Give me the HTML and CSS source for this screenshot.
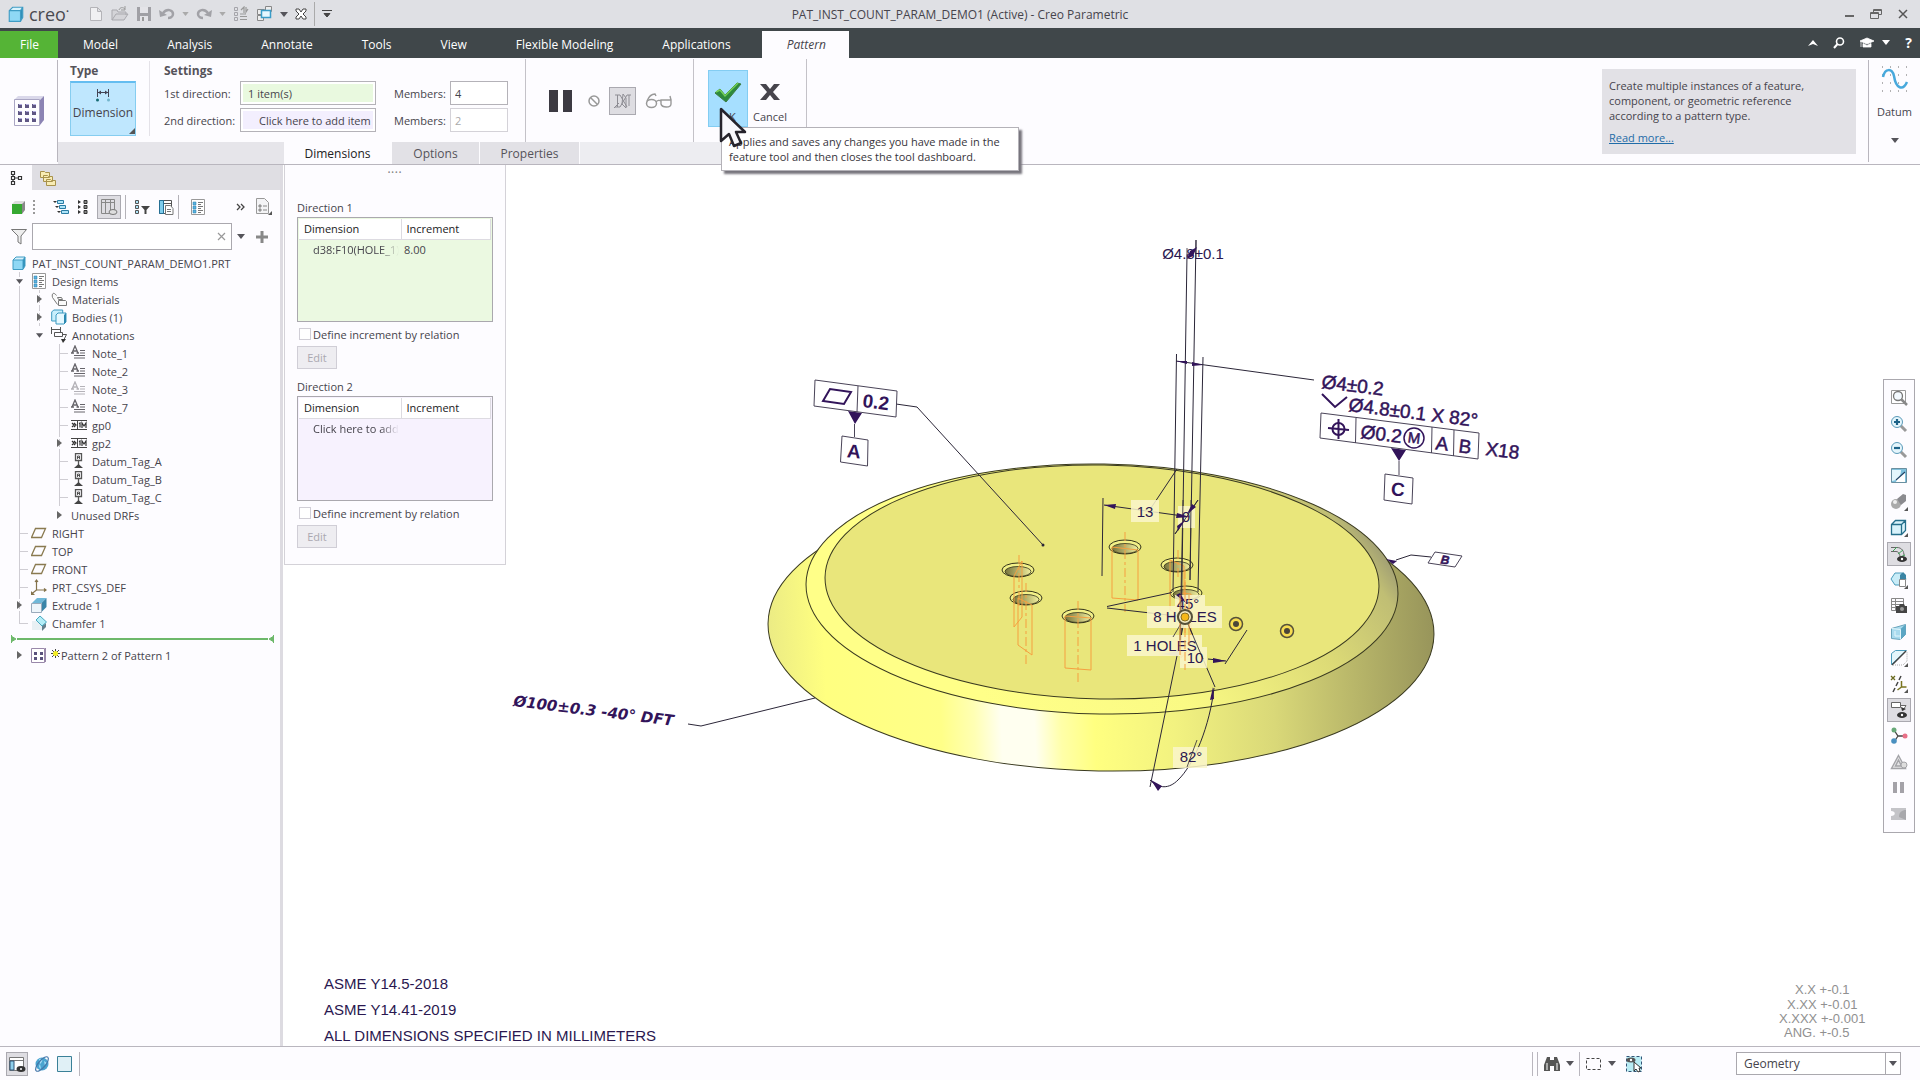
FILE: index.html
```html
<!DOCTYPE html>
<html lang="en">
<head>
<meta charset="utf-8">
<title>PAT_INST_COUNT_PARAM_DEMO1 (Active) - Creo Parametric</title>
<link rel="stylesheet" href="styles.css">
</head>
<body>
<svg class="defs" aria-hidden="true">
  <symbol id="down" viewBox="0 0 8 5"><path d="M0 0h8L4 5z" fill="currentColor"/></symbol>
  <symbol id="right" viewBox="0 0 5 8"><path d="M0 0v8l5-4z" fill="#666"/></symbol>
  <symbol id="cube" viewBox="0 0 16 16"><path d="M2 5l3-3h9l-2 3z" fill="#d8f2fc"/><path d="M12 5l2-3v9l-2 3z" fill="#2f8fb8"/><path d="M2 5h10v9.500H2z" fill="#8fd8f5"/><path d="M2 5l3-3h9v9l-2 3.500H2z M2 5h10v9 M12 5l2-3" fill="none" stroke="#3f9cc4"/></symbol>
  <symbol id="list" viewBox="0 0 16 16"><path d="M1.500.500h13v15h-13z" fill="#fff" stroke="#999"/><path d="M3 3h3v3H3z M3 7h3v3H3z M3 11h3v3H3z" fill="#5ab4e0" stroke="#2a78a8" stroke-width=".5"/><path d="M8 3.500h5M8 5.500h3M8 7.500h5M8 9.500h3M8 11.500h5M8 13.500h3" stroke="#777"/></symbol>
  <symbol id="note" viewBox="0 0 16 16"><path d="M1 8L4 1l3 7M2 6h4M0 8h3M5.500 8H8" fill="none" stroke="currentColor" stroke-width="1.300"/><path d="M9 5.500h5M9 8h5M3 10.500h11M3 13h11" stroke="currentColor"/></symbol>
  <symbol id="gp" viewBox="0 0 16 16"><path d="M0 3.500h16M0 12.500h16M6.500 3v10" stroke="#444"/><path d="M1 6l2 2-2 2M3 6l2 2-2 2M8 6.500l1-.5v4.500M11 11V6l2 3 2-3v5" fill="none" stroke="#333" stroke-width="1.200"/></symbol>
  <symbol id="tag" viewBox="0 0 16 16"><path d="M4.500.500h6v7h-6zM7.500 8v4" fill="none" stroke="#555" stroke-width="1.300"/><path d="M6.500 6V3h2v3M6.500 4.500h2" fill="none" stroke="#333" stroke-width=".8"/><path d="M3 15h9l-4.500-4z" fill="#444"/></symbol>
  <symbol id="plane" viewBox="0 0 16 16"><path d="M4.500 3.500h10l-4 9h-10z" fill="none" stroke="#8a7a50" stroke-width="1.300"/></symbol>
</svg>

<header class="titlebar">
  <div class="quick">
    <svg class="logo" width="18" height="18"><use href="#cube"/></svg><span class="brand">creo<sup>•</sup></span>
    <button aria-label="New"><svg width="16" height="16"><path d="M2.500 1.500h7l4 4v9h-11zM9.500 1.500v4h4" fill="#f0f0f2" stroke="#b4b4b8"/></svg></button>
    <button aria-label="Open"><svg width="18" height="16"><path d="M1 14V4h5l1 2h8v3M1 14l4-6h12l-4 6z" fill="#d4d4d8" stroke="#a9a9ae"/><path d="M8 4c1-3 4-3 6-1M14 0v4h-4" fill="none" stroke="#999"/></svg></button>
    <button aria-label="Save"><svg width="16" height="16"><path d="M1 1h14v14H1z" fill="#a0a0a5"/><path d="M4 1h8v6H4zM4 10h8v5H4z" fill="#e4e4e8"/><path d="M6 11h2v4H6z" fill="#999"/></svg></button>
    <button aria-label="Undo"><svg width="16" height="16"><path d="M4 7c4-5 10-3 10 1 0 3-3 4-5 4" fill="none" stroke="#a2a2a7" stroke-width="2.500"/><path d="M0 4l1 7 7-2z" fill="#a2a2a7"/></svg></button>
    <button class="dd pale" aria-label="Undo list"><svg width="7" height="4"><use href="#down"/></svg></button>
    <button aria-label="Redo"><svg width="16" height="16"><path d="M12 7c-4-5-10-3-10 1 0 3 3 4 5 4" fill="none" stroke="#a2a2a7" stroke-width="2.500"/><path d="M16 4l-1 7-7-2z" fill="#a2a2a7"/></svg></button>
    <button class="dd pale" aria-label="Redo list"><svg width="7" height="4"><use href="#down"/></svg></button>
    <button aria-label="Regenerate"><svg width="16" height="16"><path d="M1.500 1.500h3v3h-3zM1.500 6.500h3v3h-3zM1.500 11.500h3v3h-3z" fill="none" stroke="#a5a5aa"/><path d="M7 8h6M7 10.500h7M7 13.500h7M8 4l3-3v6M15 3l-2 3V1" fill="none" stroke="#999" stroke-width="1.200"/></svg></button>
    <button aria-label="Windows"><svg width="17" height="16"><path d="M1.500 3.500h7v5h-7zM9.500.500h6v5h-6zM1.500 9.500h6v5h-6z" fill="#eee" stroke="#888"/><path d="M5.500 4.500h9v7h-9z" fill="#e6f7ff" stroke="#3a9cc8" stroke-width="1.500"/></svg></button>
    <button class="dd" aria-label="Window list"><svg width="8" height="5"><use href="#down"/></svg></button>
    <button aria-label="Close window"><svg width="12" height="12"><path d="M1 1h3l2 3 2-3h3v2L8 6l3 3v2H8L6 8l-2 3H1V9l3-3-3-3z" fill="#fff" stroke="#444"/></svg></button>
    <span class="tsep"></span>
    <button aria-label="Customize"><svg width="10" height="9"><path d="M0 .5h10M2 3.500h6L5 7z" fill="#444" stroke="#444"/></svg></button>
  </div>
  <h1>PAT_INST_COUNT_PARAM_DEMO1 (Active) - Creo Parametric</h1>
  <div class="winctl">
    <button aria-label="Minimize"><svg width="12" height="12"><path d="M2 8h9" stroke="#666" stroke-width="2"/></svg></button>
    <button aria-label="Restore"><svg width="12" height="12"><path d="M3.500 4V1.500h8v5H9M.500 4.500h8v6h-8zM.500 5.500h8M3.500 2.500h8" fill="none" stroke="#666"/></svg></button>
    <button aria-label="Close"><svg width="12" height="12"><path d="M2 2l8 8M10 2l-8 8" stroke="#555" stroke-width="1.500"/></svg></button>
  </div>
</header>

<nav class="tabs">
  <a href="#file" class="file">File</a><a href="#model">Model</a><a href="#analysis">Analysis</a><a href="#annotate">Annotate</a><a href="#tools">Tools</a><a href="#view">View</a><a href="#flex">Flexible Modeling</a><a href="#apps">Applications</a><a href="#pattern" class="active">Pattern</a>
  <div class="help">
    <svg width="10" height="6"><path d="M0 6l5-6 5 6-5-2z" fill="#fff"/></svg>
    <svg width="12" height="12"><circle cx="7" cy="4.500" r="3.500" fill="none" stroke="#fff" stroke-width="1.600"/><path d="M4.500 7L1 11" stroke="#fff" stroke-width="2"/></svg>
    <svg width="14" height="12"><path d="M0 4l7-3 7 3-7 3zM3 6.500l4 2 4-2V10H3zM1 4v6" fill="#fff" stroke="#fff" stroke-width=".8"/></svg>
    <svg class="near" width="8" height="5"><use href="#down"/></svg>
    <b>?</b>
  </div>
</nav>

<section class="ribbon">
  <div class="feature"><svg width="32" height="32"><path d="M1 5l4-4h26l-4 4z" fill="#dad8ea"/><path d="M27 5l4-4v24l-4 5z" fill="#8c84b4"/><path d="M1.500 4.500h25v26h-25z" fill="#fdfdff" stroke="#aaa6c4"/><path d="M5 9h4v4H5zM12 9h4v4h-4zM19 9h4v4h-4zM5 16h4v4H5zM12 16h4v4h-4zM19 16h4v4h-4zM5 23h4v4H5zM12 23h4v4h-4zM19 23h4v4h-4z" fill="#5f5784"/><path d="M6 9h3v1H6zM13 9h3v1h-3zM20 9h3v1h-3zM6 16h3v1H6zM13 16h3v1h-3zM20 16h3v1h-3zM6 23h3v1H6zM13 23h3v1h-3zM20 23h3v1h-3z" fill="#b4aee0"/></svg></div>
  <div class="dash">
    <div class="groups">
      <div class="group type">
        <h2>Type</h2>
        <button class="bigbtn"><svg width="16" height="14"><path d="M2.500 1v8M13.500 1v8M3 4.500h10" stroke="#445" fill="none"/><path d="M3 4.500l3-2v4zM13 4.500l-3-2v4z" fill="#445"/><circle cx="2.500" cy="12" r="1.500" fill="#156a72"/><circle cx="13.500" cy="12" r="1.500" fill="#72b4cc"/></svg>Dimension<svg class="corner" width="6" height="6"><path d="M6 0v6H0z" fill="#555"/></svg></button>
      </div>
      <div class="group settings">
        <h2>Settings</h2>
        <div class="form">
          <label for="d1">1st direction:</label><input id="d1" class="green" value="1 item(s)">
          <label for="m1" class="mem">Members:</label><input id="m1" value="4">
          <label for="d2">2nd direction:</label><input id="d2" class="violet" value="Click here to add item">
          <label for="m2" class="mem">Members:</label><input id="m2" value="2" disabled>
        </div>
      </div>
      <div class="group play">
        <button aria-label="Pause"><svg width="24" height="22"><path d="M0 0h9v22H0zM14 0h9v22h-9z" fill="#3c3a42"/></svg></button>
        <button aria-label="No preview"><svg width="12" height="12"><circle cx="6" cy="6" r="5" fill="none" stroke="#999" stroke-width="1.500"/><path d="M2.500 2.500l7 7" stroke="#999" stroke-width="1.500"/></svg></button>
        <button class="pressed" aria-label="Attached preview"><svg width="20" height="18"><path d="M2 3h5M4.500 3v12M2 15h5l7-12h4M16 3v11M7 3l7 12M10 2l3 4v10l-4-4zM1 16l5-5" fill="none" stroke="#8e8d94"/></svg></button>
        <button aria-label="Verify"><svg width="28" height="16"><ellipse cx="6.500" cy="10.500" rx="5" ry="4" fill="none" stroke="#999" stroke-width="1.500"/><path d="M16 7h10v4c0 4-9 4-10 0zM11 9c1-2 4-2 5-1M2 8c2-5 5-7 8-7l1 2M26 7l-1-4" fill="none" stroke="#999" stroke-width="1.400"/></svg></button>
      </div>
      <div class="group confirm">
        <div class="okwrap">
          <button class="ok"><svg width="28" height="22"><path d="M1 12l5-4 5 6L23 2l4 1-15 18z" fill="#2c8a3c" stroke="#3d7c42"/><path d="M2 11l4-2 5 6L24 2" fill="none" stroke="#72cf58" stroke-width="1.500"/></svg>OK</button>
          <div class="tip" role="tooltip">Applies and saves any changes you have made in the feature tool and then closes the tool dashboard.</div>
          <svg class="cursor" width="28" height="42"><path d="M2 2v32l8-7 5 12 7-3-5-11h9z" fill="#f8f8fc" stroke="#26242c" stroke-width="2.500" stroke-linejoin="round"/></svg>
        </div>
        <button class="cancel"><svg width="20" height="22"><path d="M0 3h6l4 5 4-5h6l-7 8 7 8h-6l-4-5-4 5H0l7-8z" fill="#46444c"/></svg>Cancel</button>
      </div>
    </div>
    <div class="subtabs"><span class="lead"></span><button class="on">Dimensions</button><button>Options</button><button>Properties</button><span class="tail"></span></div>
  </div>
  <div class="info"><p>Create multiple instances of a feature, component, or geometric reference according to a pattern type.</p><a href="#more">Read more...</a></div>
  <button class="datum"><svg width="28" height="28"><path d="M1 2h25M1 10h25M1 18h25M1 26h25" stroke="#666" stroke-dasharray="1 7"/><path d="M2 12C4 3 11 3 13 11c2 13 9 15 13 6" fill="none" stroke="#48a9dc" stroke-width="2.500"/></svg>Datum<svg class="drop" width="8" height="5"><use href="#down"/></svg></button>
</section>

<main class="work">
  <aside class="side">
    <div class="sidetabs">
      <button class="on" aria-label="Model tree"><svg width="14" height="16"><path d="M2.500 1.500h3v3h-3zM2.500 6.500h3v3h-3zM2.500 11.500h3v3h-3zM9.500 6.500h3v3h-3zM4 4.500v2M4 9.500v2M6 8h3" fill="none" stroke="#333" stroke-width="1.200"/></svg></button>
      <button aria-label="Folder browser"><svg width="18" height="18"><path d="M1.500 2.500h4l1 1h4v5h-9zM4.500 6.500h4l1 1h4v5h-9zM7.500 10.500h4l1 1h4v5h-9z" fill="#f8ecb4" stroke="#a8924c"/></svg></button>
    </div>
    <div class="tools">
      <button aria-label="Layers"><svg width="16" height="16"><path d="M1 5l3-3h10l-3 3z" fill="#ddd"/><path d="M11 5l3-3v9l-3 4z" fill="#888"/><path d="M1 5h10v10H1z" fill="#36a832"/></svg></button>
      <svg class="grip" width="2" height="14"><path d="M1 0v14" stroke="#999" stroke-width="2" stroke-dasharray="2 2"/></svg>
      <button class="g14" aria-label="Expand"><svg width="16" height="16"><path d="M4.500 1.500h6v3h-6zM6.500 6.500h6v3h-6zM8.500 11.500h7v3h-7z" fill="#aee4f8" stroke="#2a7ca4"/><path d="M0 2h4L2 4zM2 7h4L4 9zM4 12h4l-2 2z" fill="#333"/></svg></button>
      <button aria-label="Collapse"><svg width="12" height="16"><path d="M7 1.500h3v3H7zM7 6.500h3v3H7zM7 11.500h3v3H7z" fill="#888" stroke="#333"/><path d="M1 1v4l3-2zM1 6v4l3-2zM1 11v4l3-2z" fill="#333"/></svg></button>
      <button class="pressed" aria-label="Tree columns"><svg width="18" height="18"><path d="M1.500 1.500h13v14h-13zM1.500 4.500h13M5.500 2v13M10.500 2v13" fill="none" stroke="#888"/><ellipse cx="13" cy="14" rx="4" ry="2.500" fill="#ddd" stroke="#777"/></svg></button>
      <span class="vs"></span>
      <button aria-label="Tree filters"><svg width="16" height="16"><path d="M1.500 1.500h3v3h-3zM1.500 6.500h3v3h-3zM1.500 11.500h3v3h-3z" fill="#aee4f8" stroke="#555"/><path d="M7 7h9l-3.500 4v4h-2v-4z" fill="#444"/></svg></button>
      <button aria-label="Settings"><svg width="16" height="16"><path d="M1.500 1.500h12v13h-12zM1.500 4.500h12" fill="#fff" stroke="#555"/><path d="M1.500 1.500h4v13h-4z" fill="#7fcdec" stroke="#256f94"/><path d="M7.500 6.500h5l2.500 3v6H7.500z" fill="#fff" stroke="#777"/><path d="M9 10.500h4M9 12.500h4" stroke="#777"/></svg></button>
      <span class="vs"></span>
      <button class="items" aria-label="Design items"><svg width="16" height="16"><use href="#list"/></svg></button>
      <button class="more" aria-label="More tools"><svg width="9" height="8"><path d="M1 1l3 3-3 3M5 1l3 3-3 3" fill="none" stroke="#444" stroke-width="1.300"/></svg></button>
      <button aria-label="Show"><svg width="18" height="18"><path d="M1.500.500h8l4 4v11h-12z" fill="#f4f4f6" stroke="#999"/><path d="M4 7h2v2H4zM4 11h2v2H4z" fill="#bbb" stroke="#888"/><path d="M8 8h4M8 12h4" stroke="#888"/><path d="M17 13v4h-4z" fill="#555"/></svg></button>
    </div>
    <div class="filter">
      <svg width="18" height="18"><path d="M1.500 1.500h15L11 8v8l-3-2V8z" fill="#eee" stroke="#777"/></svg>
      <div class="searchbox"><input aria-label="Filter tree"><button aria-label="Clear"><svg width="9" height="9"><path d="M1 1l7 7M8 1L1 8" stroke="#999" stroke-width="1.200"/></svg></button></div>
      <svg width="8" height="5"><use href="#down"/></svg>
      <svg class="plus" width="12" height="12"><path d="M6 0v12M0 6h12" stroke="#888" stroke-width="3"/></svg>
    </div>
    <ul class="tree">
      <li class="root"><svg class="ic"><use href="#cube"/></svg>PAT_INST_COUNT_PARAM_DEMO1.PRT</li>
      <li><i class="v a"><svg class="dn"><use href="#down"/></svg></i><svg class="ic"><use href="#list"/></svg>Design Items</li>
      <li><i class="v"></i><i class="v a"><svg class="rt"><use href="#right"/></svg></i><svg class="ic" viewBox="0 0 16 16"><path d="M5.500 4.500c-3-4-5-2-4 2l5 7M6.500 6.500h4l1 2h-4zM7.500 9.500h7l1 1v4h-8z" fill="#fafafa" stroke="#777"/></svg>Materials</li>
      <li><i class="v"></i><i class="v a"><svg class="rt"><use href="#right"/></svg></i><svg class="ic" viewBox="0 0 16 16"><path d="M.700 3l2-2h9v9l-2 2h-9z" fill="#c8effc" stroke="#3a98c0"/><path d="M5 6l2-2h8v9l-2 2H5z" fill="#e4f8ff" stroke="#3a98c0"/><path d="M13 6l2-2v9l-2 2z" fill="#2a88b0"/></svg>Bodies (1)</li>
      <li><i class="v"></i><i class="a"><svg class="dn"><use href="#down"/></svg></i><svg class="ic" viewBox="0 0 16 16"><path d="M.500 0v7M9.500 0v5M1 2.500h8M3.500 5.500h8v4h-8zM12 7.500h3.500l-3 6" fill="none" stroke="#555"/><path d="M10 12h5l-3 4z" fill="#333"/></svg>Annotations</li>
      <li><i class="v"></i><i></i><i class="v t"></i><svg class="ic dark"><use href="#note"/></svg>Note_1</li>
      <li><i class="v"></i><i></i><i class="v t"></i><svg class="ic dark"><use href="#note"/></svg>Note_2</li>
      <li><i class="v"></i><i></i><i class="v t"></i><svg class="ic light"><use href="#note"/></svg>Note_3</li>
      <li><i class="v"></i><i></i><i class="v t"></i><svg class="ic dark"><use href="#note"/></svg>Note_7</li>
      <li><i class="v"></i><i></i><i class="v t"></i><svg class="ic"><use href="#gp"/></svg>gp0</li>
      <li><i class="v"></i><i></i><i class="v a"><svg class="rt"><use href="#right"/></svg></i><svg class="ic"><use href="#gp"/></svg>gp2</li>
      <li><i class="v"></i><i></i><i class="v t"></i><svg class="ic"><use href="#tag"/></svg>Datum_Tag_A</li>
      <li><i class="v"></i><i></i><i class="v t"></i><svg class="ic"><use href="#tag"/></svg>Datum_Tag_B</li>
      <li><i class="v"></i><i></i><i class="v t"></i><svg class="ic"><use href="#tag"/></svg>Datum_Tag_C</li>
      <li><i class="v"></i><i></i><i class="a"><svg class="rt"><use href="#right"/></svg></i>Unused DRFs</li>
      <li><i class="v t"></i><svg class="ic"><use href="#plane"/></svg>RIGHT</li>
      <li><i class="v t"></i><svg class="ic"><use href="#plane"/></svg>TOP</li>
      <li><i class="v t"></i><svg class="ic"><use href="#plane"/></svg>FRONT</li>
      <li><i class="v t"></i><svg class="ic" viewBox="0 0 16 16"><path d="M5.500 1v10h10M5.500 11l-5 4M4 3l1.500-2L7 3M13 9.500l2 1.500-2 1.500" fill="none" stroke="#84724a" stroke-width="1.200"/><path d="M0 12v4h4z" fill="#84724a"/></svg>PRT_CSYS_DEF</li>
      <li><i class="v a"><svg class="rt"><use href="#right"/></svg></i><svg class="ic" viewBox="0 0 16 16"><path d="M1 6l5-5h9.500l-5 5z" fill="#6fb8d8"/><path d="M10.500 6l5-5v9l-5 5z" fill="#3a84a8"/><path d="M.500 6.500h10v9H.500z" fill="#edf5fa" stroke="#9ab"/></svg>Extrude 1</li>
      <li><i class="v t end"></i><svg class="ic" viewBox="0 0 16 16"><path d="M1 6h5l5 5v4H1z" fill="#e8f0f4"/><path d="M11 11l4-3v4l-4 4z" fill="#667f8c"/><path d="M5 5l4-4 6.500 6-4.500 4z" fill="#b4eef8" stroke="#4aa8c0"/></svg>Chamfer 1</li>
      <li class="insert"><svg width="6" height="8"><path d="M.500 0v8M0 1l5 3-5 3z" fill="#6db86a" stroke="#6db86a"/></svg><span></span><svg width="6" height="8"><path d="M5.500 0v8M6 1L1 4l5 3z" fill="#6db86a" stroke="#6db86a"/></svg></li>
      <li><i class="a"><svg class="rt"><use href="#right"/></svg></i><svg class="ic" viewBox="0 0 16 16"><path d="M.500 1.500h13v14H.500zM14.500 1v14" fill="#fff" stroke="#98a"/><path d="M3 5h3v3H3zM9 5h3v3H9zM3 10h3v3H3zM9 10h3v3H9z" fill="#5a527c"/></svg><svg class="star" width="9" height="9"><path d="M4.500 0v9M0 4.500h9M1 1l7 7M8 1L1 8" stroke="#444"/><circle cx="4.500" cy="4.500" r="2.500" fill="#f4ec20"/></svg>Pattern 2 of Pattern 1</li>
    </ul>
  </aside>

  <div class="canvas">
    <svg class="model" viewBox="283 165 1637 881" role="img" aria-label="Annotated part model">
      <defs>
        <linearGradient id="wall" gradientUnits="userSpaceOnUse" x1="768" y1="600" x2="1434" y2="560">
          <stop offset="0" stop-color="#ecec84"/><stop offset=".08" stop-color="#ffff80"/><stop offset=".25" stop-color="#ffff88"/><stop offset=".3" stop-color="#ffffb4"/><stop offset=".34" stop-color="#fffff0"/><stop offset=".39" stop-color="#fffff0"/><stop offset=".43" stop-color="#ffffa8"/><stop offset=".48" stop-color="#ffff80"/><stop offset=".6" stop-color="#f2f280"/><stop offset=".75" stop-color="#d9d878"/><stop offset="1" stop-color="#96935a"/>
        </linearGradient>
        <linearGradient id="chamfer" gradientUnits="userSpaceOnUse" x1="1000" y1="720" x2="1330" y2="480">
          <stop offset="0" stop-color="#ffff88"/><stop offset=".4" stop-color="#fafa84"/><stop offset=".75" stop-color="#dcda76"/><stop offset=".95" stop-color="#c0be74"/><stop offset="1" stop-color="#a5a374"/>
        </linearGradient>
        <linearGradient id="bore"><stop offset="0" stop-color="#77743c"/><stop offset="1" stop-color="#f0ee9c"/></linearGradient>
        <g id="hole"><ellipse rx="16" ry="7" fill="#f2f088" stroke="#33331a"/><ellipse cy="1.500" rx="13" ry="5" fill="url(#bore)" stroke="#33331a" stroke-width=".8"/></g>
        <g id="pin"><circle r="6.500" fill="#f6dc50" stroke="#55513a" stroke-width="1.500"/><circle r="3" fill="#4a4538"/></g>
      </defs>
      <g stroke="#3a3a20">
        <ellipse cx="1101" cy="629" rx="333" ry="142" transform="rotate(1 1101 629)" fill="url(#wall)"/>
        <ellipse cx="1102" cy="589" rx="296" ry="125" transform="rotate(1 1102 589)" fill="url(#chamfer)"/>
        <ellipse cx="1102" cy="582" rx="277" ry="117" transform="rotate(1 1102 582)" fill="#e9e67b"/>
      </g>
      <use href="#hole" x="1018" y="570"/><use href="#hole" x="1026" y="598"/><use href="#hole" x="1125" y="547"/><use href="#hole" x="1177" y="565"/><use href="#hole" x="1078" y="616"/><use href="#hole" x="1186" y="593"/>
      <g fill="none" stroke="#f5a040">
        <path d="M1112 547v51l26 2v-50zM1065 616v52l26 2v-52zM1014 576v51l8-10v-56zM1018 598v47l14 10v-50zM1170 560v50l14 6v-50zM1181 593v65l10-12v-52z"/>
        <path d="M1125 532v80M1078 601v82M1019 555v52M1026 583v82M1178 550v30M1185 570v90" stroke-dasharray="9 3 3 3"/>
      </g>
      <g fill="none" stroke="#2b2638">
        <path d="M1176.500 354L1173 592M1187 254L1181 640M1196 240L1190 580M1203 357L1198 592"/>
        <path d="M1176 361l138 19M1103 498l-1 78M1104 505l86 12M1151 508l26-39M1175 534l23-34"/>
        <path d="M1107 606.500l65-14M1107 608l78 9M1185 617l-35 170M1185 617l30 70M1208 659l18 2M1225 664l22-34"/>
        <path d="M1214 688c-4 37-20 77-36 92-9 9-19 9-28 0"/>
        <path d="M688 724l13 2 114-28M896 404l21 3 126 138M1431 557l-20-2-15 5"/>
      </g>
      <circle cx="1043" cy="545" r="1.500" fill="#2b2638"/>
      <path d="M1161 654l18-3v5z" fill="#a8a4cc"/>
      <g fill="#faf6cc" fill-opacity=".85">
        <path d="M1131 500h28v22h-28zM1178 506h17v22h-17zM1175 595h30v20h-30zM1147 606h75v22h-75zM1127 635h75v21h-75zM1180 647h27v21h-27zM1173 747h34v21h-34z"/>
      </g>
      <g class="dim" text-anchor="middle">
        <text x="1145" y="517">13</text><text x="1186" y="522">0</text><text x="1188" y="609">45°</text><text x="1185" y="622">8 HOLES</text><text x="1165" y="651">1 HOLES</text><text x="1195" y="663">10</text><text x="1191" y="762">82°</text><text x="1193" y="259">Ø4.8±0.1</text>
      </g>
      <g fill="none" stroke="#2b2638" stroke-width=".8"><path d="M1175 534l23-34M1183 500l-3 140M1191 500l-1 80M1185 617l-12 20M1185 617l18 42M1187 254v-6M1196 240v18M1197 740l-10 27"/></g>
      <g fill="#32145a">
        <path d="M1104 505l12-1-1 5zM1190 517l-13-4-1 5zM1185 520l-7 11-1-5zM1187 514l5-10 4 3zM1226 661l-13-3v5zM1213 687l-3 13 4-1zM1151 780l11 6-4 5zM1176 361l11 0v3zM1203 365l-11-3v4zM1187 259l3-8 7-4-4 9zM1397 561l-11-2 7 5zM1186 603l-6-10-4 2z"/>
        <path d="M848 411l14 2-7 11zM1391 448l15 2-7 11z"/>
      </g>
      <g stroke="#f5a040" fill="none"><path d="M1180 595v60M1189 595v50"/><path d="M1185 580v90" stroke-dasharray="9 3"/></g>
      <g transform="translate(1185 617)"><circle r="7" fill="#f0e8c0" stroke="#55513a" stroke-width="2"/><circle r="4" fill="#f6b818" stroke="#8a7024"/></g>
      <use href="#pin" x="1236" y="624"/><use href="#pin" x="1287" y="631"/>
      <g fill="#fff" stroke="#4a4458">
        <path d="M815 380l82 11-1 26-82-11zM858 386l-1 26M854.500 424v13M842 436l26 4-.5 26-27-4z"/>
        <path d="M1321 413l158 20-1 26-158-21zM1356 418l-.5 25M1432 427l-.5 26M1454 430l-.5 26M1399 461v14M1385 474l28 4-1 26-28-4zM1435 552l27 4-7 11-27-4z"/>
      </g>
      <g fill="none" stroke="#32145a" stroke-width="2">
        <path d="M823 401l7-12 21 3-7 12zM1322 394l13 13 12-10"/>
        <circle cx="1338.500" cy="429" r="6"/><path d="M1328 428l21 2M1338.500 419v20"/><circle cx="1414" cy="438" r="10" stroke-width="1.500"/>
      </g>
      <g class="gtol">
        <text class="b" x="862" y="407" transform="rotate(7 862 407)">0.2</text>
        <text class="b" x="854" y="458" text-anchor="middle" transform="rotate(5 854 451)">A</text>
        <text x="1321" y="388" transform="rotate(7 1321 388)">Ø4±0.2</text>
        <text x="1348" y="411" transform="rotate(7 1348 411)">Ø4.8±0.1 X 82°</text>
        <text x="1360" y="438" transform="rotate(7 1360 438)">Ø0.2</text>
        <text class="m" x="1414" y="443" text-anchor="middle" transform="rotate(7 1414 438)">M</text>
        <text x="1442" y="450" text-anchor="middle" transform="rotate(7 1442 444)">A</text>
        <text x="1465" y="453" text-anchor="middle" transform="rotate(7 1465 447)">B</text>
        <text x="1485" y="455" transform="rotate(7 1485 455)">X18</text>
        <text class="b" x="1398" y="496" text-anchor="middle" transform="rotate(5 1398 489)">C</text>
        <text class="tagb" x="1445" y="564" text-anchor="middle" transform="rotate(7 1445 560)">B</text>
        <text class="wide" x="513" y="706" transform="rotate(7 513 706)">Ø100±0.3 -40° DFT</text>
      </g>
      <g class="std"><text x="324" y="989">ASME Y14.5-2018</text><text x="324" y="1015">ASME Y14.41-2019</text><text x="324" y="1041">ALL DIMENSIONS SPECIFIED IN MILLIMETERS</text></g>
      <g class="acc"><text x="1795" y="994">X.X +-0.1</text><text x="1787" y="1009">X.XX +-0.01</text><text x="1779" y="1023">X.XXX +-0.001</text><text x="1784" y="1037">ANG. +-0.5</text></g>
    </svg>

    <section class="panel">
      <div class="dots">••••</div>
      <h3>Direction 1</h3>
      <div class="grid green"><table><thead><tr><th>Dimension</th><th>Increment</th></tr></thead><tbody><tr><td class="fade">d38:F10(HOLE_1)</td><td>8.00</td></tr></tbody></table></div>
      <div class="check"><input type="checkbox" id="r1"><label for="r1">Define increment by relation</label></div>
      <button class="edit" disabled>Edit</button>
      <h3>Direction 2</h3>
      <div class="grid violet"><table><thead><tr><th>Dimension</th><th>Increment</th></tr></thead><tbody><tr><td class="fade">Click here to add</td><td></td></tr></tbody></table></div>
      <div class="check"><input type="checkbox" id="r2"><label for="r2">Define increment by relation</label></div>
      <button class="edit" disabled>Edit</button>
    </section>

    <div class="viewbar">
      <button aria-label="Refit"><svg viewBox="0 0 18 18"><path d="M1.500 1.500h14v13h-14z" fill="#fff" stroke="#999"/><circle cx="8" cy="7" r="4.500" fill="#f4faff" stroke="#777" stroke-width="1.300"/><path d="M11 10l6 6" stroke="#888" stroke-width="2.500"/></svg></button>
      <button aria-label="Zoom in"><svg viewBox="0 0 18 18"><path d="M10 10l6 6" stroke="#999" stroke-width="3"/><circle cx="7" cy="7" r="5.500" fill="#e4f5fc" stroke="#5a9ab8"/><path d="M4 7h6M7 4v6" stroke="#1c6288" stroke-width="2.200"/></svg></button>
      <button aria-label="Zoom out"><svg viewBox="0 0 18 18"><path d="M10 10l6 6" stroke="#999" stroke-width="3"/><circle cx="7" cy="7" r="5.500" fill="#e4f5fc" stroke="#5a9ab8"/><path d="M4 7h6" stroke="#1c6288" stroke-width="2.200"/></svg></button>
      <button aria-label="Repaint"><svg viewBox="0 0 18 18"><path d="M1.500 1.500h15v14h-15z" fill="#7fc0dc" stroke="#6a8fa0"/><path d="M2 3h9c0 6-3 10-9 11z" fill="#e4f6fc"/><path d="M7 12l8-7v10H6z" fill="#fff"/><path d="M6 13l9-8" stroke="#246" stroke-width="1.200"/></svg></button>
      <button aria-label="Rendering"><svg viewBox="0 0 18 18"><circle cx="6" cy="11" r="5" fill="#aaa"/><path d="M7 6l6-5 3 1v6l-5 4z" fill="#8b8b8f"/><circle cx="5" cy="9" r="2" fill="#eee"/><path d="M18 14v4h-4z" fill="#555"/></svg></button>
      <button aria-label="Display style"><svg viewBox="0 0 18 18"><path d="M1.500 5.500l4-4h10v10l-4 4h-10zM1.500 5.500h10v10M11.500 5.500l4-4" fill="#d8f2fb" stroke="#256f8c" stroke-width="1.300"/><path d="M18 14v4h-4z" fill="#555"/></svg></button>
      <button class="pressed" aria-label="Edge display"><svg viewBox="0 0 18 18"><path d="M1 2.500h6c5 0 7 4 7 8M1 6.500h5c3 0 4 3 4 6" fill="none" stroke="#666"/><path d="M3 6l4-4M8 9l5-4M10 12l5-2" stroke="#3da858"/><ellipse cx="12" cy="14" rx="5" ry="3" fill="#333"/><circle cx="12" cy="14" r="1.200" fill="#fff"/></svg></button>
      <button aria-label="Saved views"><svg viewBox="0 0 18 18"><path d="M1 8l4-6h7l4 6-4 6H5z" fill="#c8ecf8" stroke="#4a9cbc"/><path d="M10 8V4l3-3 3 3v4z" fill="#3a84a4"/><path d="M9.500 8.500h6v7h-6z" fill="#fff" stroke="#888"/><path d="M18 14v4h-4z" fill="#555"/></svg></button>
      <button aria-label="View images"><svg viewBox="0 0 18 18"><path d="M1.500 1.500h12v12h-12zM1.500 4.500h12M1.500 7.500h12M1.500 10.500h12M5.500 2v12" fill="none" stroke="#888"/><path d="M6 9h3l1-2h4l1 2h2v7H6z" fill="#444"/><circle cx="12" cy="12" r="2" fill="#999"/></svg></button>
      <button aria-label="Perspective"><svg viewBox="0 0 18 18"><path d="M1.500 5.500l14-4v10l-5 5-9-1z" fill="#a8daee" stroke="#6aa4bc"/><path d="M10.500 6l5-4.500v10l-5 5z" fill="#5ba6c4"/><path d="M1.500 5.500l9 1v10M5 8v5h5" fill="none" stroke="#e4f6fc"/></svg></button>
      <button aria-label="Sections"><svg viewBox="0 0 18 18"><path d="M1.500 15.500v-11l4-3h11z" fill="#e4f6fc" stroke="#4a9cbc"/><path d="M2 16L16 2" stroke="#444" stroke-width="1.500"/><path d="M3 16h10l4-4V3" fill="none" stroke="#aaa" stroke-dasharray="1 1"/><path d="M18 14v4h-4z" fill="#555"/></svg></button>
      <button aria-label="Datum display"><svg viewBox="0 0 18 18"><path d="M1 1l4 4M5 1L1 5" stroke="#6a6a20" stroke-width="1.300"/><path d="M11 1l-2 4M8 7l-2 4M5 13l-2 4" stroke="#444" stroke-width="1.500"/><path d="M11.500 6v6h5M11.500 12l-4 3" fill="none" stroke="#7a7420" stroke-width="1.500"/><path d="M18 14v4h-4z" fill="#555"/></svg></button>
      <button class="pressed" aria-label="Annotation display"><svg viewBox="0 0 18 18"><path d="M1.500 1.500h9v5h-9zM11 4.500h5l-3 5" fill="#fff" stroke="#666"/><path d="M11 6l1 4 4-2z" fill="#333"/><ellipse cx="12" cy="14" rx="5" ry="3" fill="#333"/><circle cx="12" cy="14" r="1.200" fill="#fff"/></svg></button>
      <button aria-label="Spin center"><svg viewBox="0 0 18 18"><path d="M4 3l4 6 7 0M8 9l-4 6" fill="none" stroke="#444" stroke-width="1.300"/><circle cx="4" cy="3" r="2.500" fill="#68a878"/><circle cx="15" cy="9" r="2.500" fill="#e87088"/><circle cx="4" cy="14" r="2.800" fill="#4a90c0"/></svg></button>
      <button aria-label="Simulate"><svg viewBox="0 0 18 18"><path d="M8.500 2.500l7 13h-14zM8.500 7l3 6h-6z" fill="#e4e4e6" stroke="#a4a4a8" stroke-width="1.400"/><circle cx="14" cy="12" r="3" fill="#ddd" stroke="#a4a4a8"/></svg></button>
      <button aria-label="Pause"><svg viewBox="0 0 18 18"><path d="M3 3h4v11H3zM10 3h4v11h-4z" fill="#a4a2a8"/></svg></button>
      <button aria-label="Play"><svg viewBox="0 0 18 18"><path d="M1 3h15v12H1v-4c5 0 5-5 0-5z" fill="#c4c4c8"/><path d="M9 12c0-5 3-7 7-7v10z" fill="#a8a8ac"/></svg></button>
    </div>
  </div>
</main>

<footer class="status">
  <button class="pressed" aria-label="Navigator"><svg width="18" height="18"><path d="M1.500 2.500h14v13h-14zM1.500 5.500h14" fill="#fff" stroke="#777"/><path d="M2 6h4v9H2z" fill="#8fd0ec" stroke="#357"/><ellipse cx="13" cy="14" rx="4.500" ry="3" fill="#333"/><circle cx="13" cy="14" r="1" fill="#fff"/></svg></button>
  <button aria-label="Browser"><svg width="18" height="18"><circle cx="9" cy="9" r="6.500" fill="#4aa4d0"/><path d="M6 4c4-1 4 2 2 4s-3 4 0 6M11 6l3 2-2 3z" fill="#a4dcf4"/><ellipse cx="9" cy="9" rx="9" ry="3.500" transform="rotate(-50 9 9)" fill="none" stroke="#47a" stroke-width="1.200"/></svg></button>
  <button aria-label="Full screen"><svg width="18" height="18"><path d="M1.500 1.500h14v15h-14z" fill="#e0f0f6" stroke="#3a8098"/></svg></button>
  <span class="ssep"></span>
  <span class="grow"></span>
  <span class="ssep"></span><span class="ssep dbl"></span>
  <button aria-label="Find"><svg width="18" height="18"><path d="M4 2h3v3h4V2h3l3 8v6h-6v-5H7v5H1v-6z" fill="#555"/><path d="M3 8h2v7H3zM13 8h2v7h-2z" fill="#aaa"/></svg></button>
  <svg width="8" height="5"><use href="#down"/></svg>
  <span class="ssep"></span>
  <button aria-label="Selection box"><svg width="18" height="18"><path d="M1.500 3.500h14v11h-14z" fill="none" stroke="#444" stroke-dasharray="3 2"/></svg></button>
  <svg width="8" height="5"><use href="#down"/></svg>
  <button class="pick" aria-label="Smart selection"><svg width="18" height="18"><path d="M1.500 1.500h15v15h-15z" fill="#b8ecf4" stroke="#357" stroke-dasharray="3 2"/><ellipse cx="6" cy="5" rx="4.500" ry="2.500" fill="#555"/><circle cx="6" cy="5" r="1.200" fill="#fff"/><path d="M9 7v9l2-2 2 3 2-1-1-3h2z" fill="#fff" stroke="#333"/></svg></button>
  <div class="combo"><select aria-label="Selection filter"><option>Geometry</option></select><span><svg width="8" height="5"><use href="#down"/></svg></span></div>
</footer>
</body>
</html>
```
FILE: styles.css
```css
* { box-sizing: border-box; }
html, body { height: 100%; }
body { margin: 0; display: flex; flex-direction: column; min-height: 100vh; overflow: hidden; background: #fdfcff; color: #46444c; font: 11px/15px "Open Sans", "Noto Sans", sans-serif; }
button { display: flex; align-items: center; justify-content: center; margin: 0; padding: 0; border: 0; background: none; color: inherit; font: inherit; }
input, select { font: inherit; color: inherit; }
svg { display: block; flex: none; color: #55545a; }
.defs { position: absolute; width: 0; height: 0; }
.pressed { background: #dedde2; border: 1px solid #aaa9b0; }

.titlebar { display: grid; grid-template-columns: 1fr auto 1fr; align-items: center; height: 28px; background: #dfe0e4; }
.titlebar h1 { margin: 0; font-size: 12px; font-weight: 400; }
.quick { display: flex; align-items: center; height: 28px; padding-left: 7px; gap: 7px; }
.quick .brand { width: 52px; margin-left: -3px; font-size: 18px; line-height: 24px; color: #4a4a50; }
.brand sup { font-size: 8px; line-height: 8px; }
.pale svg { color: #aaa; }
.tsep { width: 1px; height: 24px; background: #aaa; }
.winctl { display: flex; justify-content: flex-end; gap: 15px; padding-right: 11px; }

.tabs { display: flex; align-items: flex-end; height: 30px; background: #40474a; font-size: 12px; }
.tabs a { padding: 1px 24px 0 25px; line-height: 26px; color: #fff; text-decoration: none; }
.tabs .file { padding: 1px 19px 0 20px; background: #55b436; }
.tabs .active { margin-left: 7px; padding-right: 23px; background: #fdfcff; color: #46444c; font-style: italic; }
.help { display: flex; align-items: center; gap: 15px; height: 27px; margin-left: auto; padding: 0 8px 4px 0; color: #fff; font-size: 14px; }
.help svg { color: #fff; }
.help .near { margin-left: -7px; }

.ribbon { display: flex; height: 107px; border-bottom: 1px solid #b9b6be; }
.feature { display: flex; align-items: center; justify-content: center; width: 58px; margin: 2px 0; border-right: 1px solid #b9b6be; }
.dash { flex: 1; }
.groups { display: flex; height: 84px; }
.group { padding: 4px 14px 0; border-right: 1px solid #c4c2c8; margin-top: 1px; }
.group h2 { margin: 0 0 2px; font-size: 12px; line-height: 16px; font-weight: 700; color: #55535a; }
.type { width: 92px; padding: 2px 13px 0 12px; margin-top: 3px; margin-bottom: 6px; border-color: #e4e2e8; }
.type h2 { margin-bottom: 2px; }
.bigbtn { position: relative; flex-direction: column; justify-content: flex-start; width: 66px; height: 55px; padding-top: 5px; gap: 3px; border: 1px solid #86cdf0; border-top: 2px solid #64bdf0; background: #bfe7fe; font-size: 12px; }
.corner { position: absolute; right: 0; bottom: 1px; }
.settings { width: 376px; }
.form { display: grid; grid-template-columns: 76px 136px 74px 58px; gap: 3px 0; align-items: center; }
.form input { min-width: 0; height: 24px; padding: 0 4px; border: 1px solid #b4b2b8; background: #fff; }
.form input:disabled { border-color: #d4d2d8; color: #aaa; }
.form .green, .form .violet { padding-left: 7px; box-shadow: inset 0 0 0 2px #fff; background: #e9f9df; }
.form .violet { padding-left: 18px; background: #f3effe; }
.form .mem { padding-left: 18px; }
.play { display: flex; align-items: center; width: 168px; padding: 0 20px 0 23px; gap: 9px; }
.play .pressed { width: 28px; height: 28px; }
.play button:nth-child(2) { margin-left: 6px; }
.confirm { display: flex; align-items: flex-start; gap: 2px; width: 113px; padding: 11px 14px 0; }
.okwrap { position: relative; z-index: 5; }
.ok, .cancel { flex-direction: column; width: 40px; height: 57px; padding-top: 10px; gap: 6px; justify-content: flex-start; border: 1px solid transparent; }
.ok { border-color: #83cdf2; background: #a6dfff; }
.tip { position: absolute; left: 13px; top: 57px; width: 298px; padding: 6px 8px 6px 7px; border: 1px solid #b4b2b8; background: #fff; box-shadow: 3px 3px 2px #77757d; color: #37353c; }
.cursor { position: absolute; left: 11px; top: 37px; }
.subtabs { display: flex; height: 22px; color: #55535a; }
.subtabs span, .subtabs button { background: #ededf1; }
.subtabs .lead { width: 226px; background: #e6e5ea; }
.subtabs .tail { width: 227px; }
.subtabs button { width: 99px; margin-right: 1px; background: #e2e1e6; font-size: 12px; }
.subtabs button:nth-of-type(2) { width: 87px; }
.subtabs .on { width: 107px; background: #fdfcff; color: #222; }
.info { width: 254px; height: 85px; margin: 11px 12px 0 0; padding: 9px 20px 0 7px; background: #e2e1e6; }
.info p { margin: 0 0 7px; }
.info a { color: #1f6ca8; }
.datum { flex-direction: column; justify-content: flex-start; width: 52px; margin: 2px 0; padding-top: 5px; gap: 11px; border-left: 1px solid #b9b6be; }
.datum .drop { margin-top: 8px; }

.work { display: flex; flex: 1; min-height: 0; }
.side { width: 283px; border-right: 3px solid #dddbe1; }
.sidetabs { display: flex; height: 25px; background: #dfdee3; }
.sidetabs button { width: 32px; }
.sidetabs .on { background: #fdfcff; }
.tools { display: flex; align-items: center; height: 33px; padding-left: 11px; gap: 8px; }
.tools .pressed { width: 24px; height: 24px; }
.tools .g14 { margin-left: 10px; }
.tools .items { margin-left: 3px; }
.tools .more { margin: 0 2px 0 22px; }
.tools .grip { margin-left: -2px; }
.vs { width: 1px; height: 24px; margin: 0 0 0 -4px; background: #b4b2b8; }
.filter { display: flex; align-items: center; height: 27px; padding-left: 10px; gap: 4px; }
.searchbox { display: flex; width: 200px; height: 27px; margin-right: 1px; border: 1px solid #aaa8ae; background: #fff; }
.searchbox input { flex: 1; min-width: 0; border: 0; background: none; }
.searchbox button { width: 20px; }
.filter .plus { margin-left: 7px; }

.tree { margin: 4px 0 0; padding: 0 6px 0 11px; list-style: none; }
.tree li { display: flex; align-items: center; height: 18px; white-space: nowrap; }
.tree i { display: flex; align-items: center; align-self: stretch; width: 20px; }
.tree .v { background: linear-gradient(#cfcdd3, #cfcdd3) 8px 0 / 1px 100% no-repeat; }
.tree .v.t { background: linear-gradient(#cfcdd3, #cfcdd3) 8px 0 / 1px 100% no-repeat, linear-gradient(#cfcdd3, #cfcdd3) 8px 9px / 9px 1px no-repeat; }
.tree .v.end { background-size: 1px 9px, 9px 1px; }
.tree .dn { width: 7px; height: 5px; margin-left: 5px; outline: 2px solid #fdfcff; }
.tree .rt { width: 5px; height: 8px; margin-left: 6px; outline: 2px solid #fdfcff; }
.ic { width: 16px; height: 16px; margin-right: 5px; }
.ic.dark { color: #66646a; }
.ic.light { color: #b4b2b8; }
.tree .insert { height: 14px; }
.insert span { flex: 1; height: 2px; background: #6db86a; }
.star { margin: -3px 1px 0 -1px; }

.canvas { position: relative; flex: 1; min-width: 0; background: #fff; }
.model { width: 100%; height: 100%; font-family: "Liberation Sans", Arial, sans-serif; }
.dim { font-size: 15px; fill: #2a1850; }
.gtol { font-size: 19px; fill: #32145a; }
.gtol text { stroke: #32145a; stroke-width: .5px; }
.gtol .b { font-weight: 700; stroke-width: 0; }
.gtol .m { font-size: 15px; }
.gtol .tagb { font-size: 12px; font-weight: 700; font-style: italic; }
.gtol .wide { font: italic 700 15px "DejaVu Sans", sans-serif; stroke-width: 0; }
.std { font-size: 15px; fill: #2a1850; }
.acc { font-size: 13px; fill: #909090; }

.panel { position: absolute; left: 1px; top: 0; width: 222px; padding: 0 12px 16px; border: 1px solid #d4d2d8; border-top: 0; background: #fdfcff; }
.dots { height: 16px; text-align: center; font-size: 7px; line-height: 16px; color: #888; letter-spacing: 1px; }
.panel h3 { margin: 0; padding-top: 18px; font-weight: 400; font-size: 11px; line-height: 18px; }
.panel .grid { height: 105px; padding: 1px; border: 1px solid #aaa8ae; }
.panel .grid.green { background: #ebf9e1; }
.panel .grid.violet { background: #f7f2fe; }
table { width: 100%; table-layout: fixed; border-collapse: collapse; }
th { height: 20px; padding: 0 5px; border: 1px solid #dddbe1; border-left: 0; border-top: 0; background: #fff; text-align: left; font-weight: 400; color: #222; }
th:first-child { width: 102px; }
td { height: 20px; padding: 0 3px; overflow: hidden; white-space: nowrap; }
td.fade { padding: 0 0 0 14px; mask-image: linear-gradient(90deg, #000 80%, transparent 98%); }
.check { display: flex; align-items: center; height: 24px; gap: 2px; padding-left: 2px; }
.check input { appearance: none; width: 12px; height: 12px; margin: 0; border: 1px solid #d0ced6; background: #fff; }
.edit { width: 40px; height: 23px; border: 1px solid #d0ced6; background: #eeedf1; color: #aaa8b0; }
.edit + h3 { padding-top: 9px; }

.viewbar { position: absolute; right: 5px; top: 50%; transform: translateY(-50%); display: flex; flex-direction: column; align-items: center; gap: 2px; width: 32px; padding: 6px 0; border: 1px solid #aaa8ae; background: #fdfcff; }
.viewbar button { width: 24px; height: 24px; }
.viewbar svg { width: 18px; height: 18px; }

.status { display: flex; align-items: center; height: 34px; padding: 0 19px 0 6px; gap: 5px; border-top: 1px solid #b9b6be; }
.status .pressed { width: 22px; height: 24px; }
.ssep { width: 1px; height: 24px; background: #b9b6be; }
.ssep.dbl { margin-left: -1px; }
.grow { flex: 1; }
.pick { margin-left: 4px; }
.combo { display: flex; width: 165px; height: 23px; margin-left: 88px; border: 1px solid #aaa8ae; background: #fff; }
.combo select { flex: 1; padding: 0 7px; border: 0; appearance: none; background: none; font-size: 12px; }
.combo span { display: flex; align-items: center; justify-content: center; width: 15px; border-left: 1px solid #aaa8ae; }
```
